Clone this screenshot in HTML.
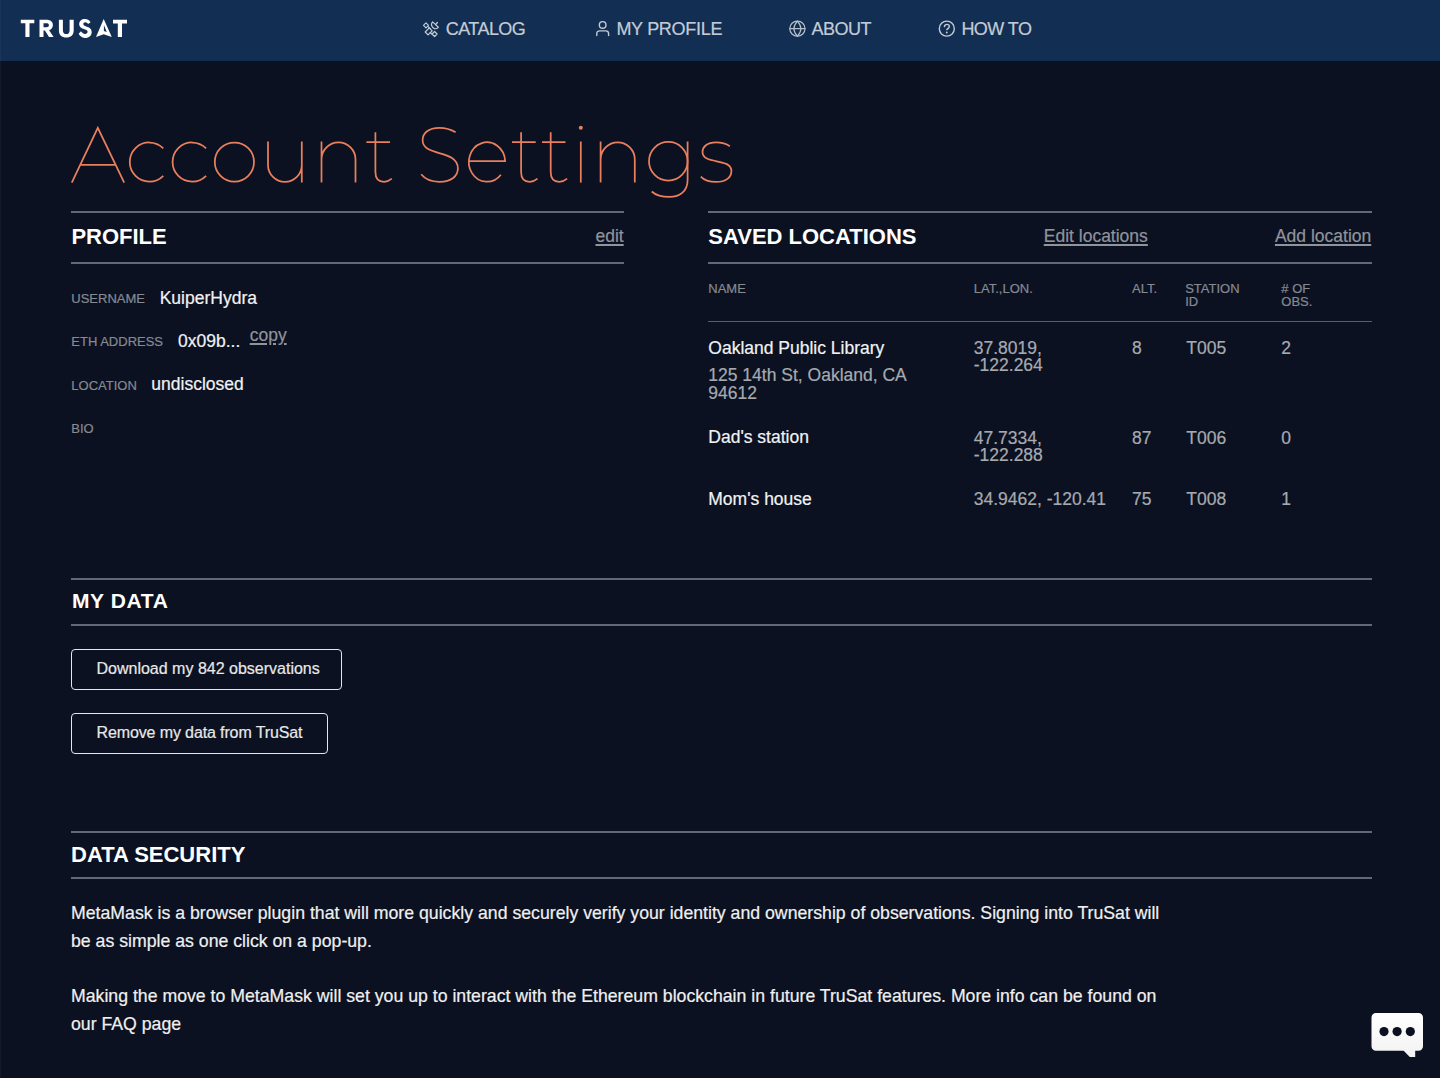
<!DOCTYPE html>
<html><head><meta charset="utf-8">
<style>
html,body{margin:0;padding:0;}
body{width:1440px;height:1078px;overflow:hidden;background:#0b1121;position:relative;font-family:"Liberation Sans",sans-serif;color:#f0f0f0;}
.t{position:absolute;white-space:nowrap;-webkit-text-stroke:0.2px currentColor;}
.hdr{position:absolute;left:0;top:0;width:1440px;height:61px;background:#122e52;box-shadow:0 1px 0 #0a101d;}
.edge{position:absolute;left:0;top:0;width:1px;height:1078px;background:rgba(255,255,255,0.035);}
.nav{font-size:18px;line-height:18px;color:#c3ccd6;letter-spacing:-0.55px;top:20.3px;}
.h2{font-size:22px;line-height:22px;font-weight:bold;color:#fff;-webkit-text-stroke:0;}
.lnk{font-size:17.5px;line-height:17.5px;color:#90949b;text-decoration:underline;text-underline-offset:1.5px;text-decoration-thickness:1.5px;}
.lbl{font-size:13px;line-height:13px;color:#868a91;}
.val{font-size:17.5px;line-height:17.5px;color:#f2f2f2;}
.gry{font-size:17.5px;line-height:17.5px;color:#a7aaaf;}
.line2{position:absolute;height:2px;background:#646876;}
.line1{position:absolute;height:1px;background:#5a5e66;}
.btn{position:absolute;box-sizing:border-box;border:1.5px solid #e6e6e6;border-radius:4px;}
.btxt{font-size:16px;line-height:16px;color:#e8e8e8;}
.para{font-size:17.7px;line-height:17.7px;color:#f0f0f0;}
</style></head><body>
<div class="hdr"></div>

<svg style="position:absolute;left:0;top:0" width="1440" height="1078" viewBox="0 0 1440 1078">
<!-- logo -->
<g fill="#ffffff">
<path d="M20.8,19.8H34.3V23.3H29.5V37.1H25.4V23.3H20.8Z"/>
<path fill-rule="evenodd" d="M39.5,19.8H46.5C50.6,19.8 52.9,21.9 52.9,25.1C52.9,27.7 51.5,29.5 49.1,30.2L53.6,37.1H49L44.9,30.6H43.5V37.1H39.5ZM43.5,23.3V27.2H46.3C48,27.2 48.9,26.5 48.9,25.2C48.9,23.9 48,23.3 46.3,23.3Z"/>
<path d="M58.9,19.8H62.9V30.2C62.9,32.8 64.2,34.1 66.3,34.1C68.4,34.1 69.6,32.8 69.6,30.2V19.8H73.7V30.2C73.7,35 70.8,37.5 66.3,37.5C61.8,37.5 58.9,35 58.9,30.2Z"/>
<path d="M90.6,22.2C89.2,20.2 87.3,19 85,19C81.5,19 79.2,21.1 79.2,24C79.2,27.2 81.6,28.3 84.3,29.2C86.5,29.9 87.6,30.4 87.6,31.8C87.6,33 86.6,33.9 85.1,33.9C83.3,33.9 81.9,32.8 81,31.3L78.6,33.8C80,36.4 82.5,38 85.2,38C89.1,38 91.7,35.6 91.7,32C91.7,28.6 89.4,27.4 86.4,26.4C84.4,25.7 83.3,25.3 83.3,24C83.3,23 84.1,22.3 85.2,22.3C86.4,22.3 87.4,23 88.1,24.1Z"/>
<path fill-rule="evenodd" d="M103.7,19L111.8,37L103.7,34.2L96,36.9ZM103.9,25V31L106.8,31.9Z"/>
<path d="M113,19.8H127V23.4H122V37.1H117.8V23.4H113Z"/>
</g>
<!-- nav icons -->
<g fill="none" stroke="#c3ccd6" stroke-width="1.4" stroke-linecap="round" stroke-linejoin="round">
  <!-- person -->
  <circle cx="602.66" cy="24.9" r="3.3"/>
  <path d="M596.8,35.6V33.6C596.8,31.8 598,30.9 599.8,30.9H605.6C607.4,30.9 608.6,31.8 608.6,33.6V35.6"/>
  <!-- globe -->
  <g stroke-width="1.2" stroke="#b4bfcc">
  <circle cx="797.4" cy="28.66" r="7.6"/>
  <path d="M789.8,28.66H805"/>
  <path d="M797.4,21.06C794.9,24 793.9,26.5 793.9,28.66C793.9,30.8 794.9,33.3 797.4,36.26C799.9,33.3 800.9,30.8 800.9,28.66C800.9,26.5 799.9,24 797.4,21.06Z"/>
  </g>
  <!-- question -->
  <circle cx="946.8" cy="28.66" r="7.5"/>
  <path d="M944.4,26.6C944.6,25.2 945.6,24.4 946.9,24.4C948.3,24.4 949.3,25.3 949.3,26.5C949.3,27.9 948,28.5 946.8,29.6"/>
  <!-- catalog satellite -->
</g>
<g fill="none" stroke="#c3ccd6" stroke-width="1.2" stroke-linecap="round" stroke-linejoin="round">
  <path d="M425.96,22.9L428.46,25.4L425.96,27.9L423.46,25.4Z"/>
  <path d="M434.6,31.5L437.1,34L434.6,36.5L432.1,34Z"/>
  <path d="M429.3,27.9L432.2,30.8L428.1,34.9L425.2,32Z"/>
  <path d="M432.6,21.9C431.2,23.6 431.3,26.1 433.1,27.7C434.8,29.2 437,29.2 438.4,27.2Z"/>
  <path d="M435.6,24.5L437.4,22.5"/>
  <path d="M428.4,27L430.6,29.2M430.2,32.5L432.4,34.7"/>
</g>
<circle cx="946.8" cy="32.5" r="0.95" fill="#c3ccd6"/>
<!-- title -->
<g fill="none" stroke="#ea7f5d" stroke-width="1.75">
<path d="M71.8,182.6L97.8,127.8L124.2,182.6M80,164.9H115.7"/>
<path d="M163.3,148.3A19.6,19.6 0 1 0 163.3,175.9"/>
<path d="M206.1,148.3A19.6,19.6 0 1 0 206.1,175.9"/>
<circle cx="234.4" cy="162.1" r="19.6"/>
<path d="M268,141.5V164.9A16.9,16.9 0 0 0 301.8,164.9M301.8,141.5V182.6"/>
<path d="M321.5,182.6V141.5M321.5,159.4A17,17 0 0 1 355.5,159.4V182.6"/>
<path d="M375.4,132.2V172C375.4,179 379,181.75 384,181.75C387,181.75 389.5,180.6 391.8,178.6M366.4,142H390"/>
<path d="M455.6,132.3C450.5,129.2 445,127.85 439.5,127.85C428,127.85 422.6,133.5 422.6,140.3C422.6,157 457.9,149 457.9,168.5C457.9,176 451.5,181.75 439.5,181.75C431,181.75 424.5,178.6 421.2,174.3"/>
<path d="M468.85,161.1H505.13A18.15,19.7 0 1 0 500.90,174.71"/>
<path d="M521.1,132.2V172C521.1,179 524.7,181.75 529.7,181.75C532.7,181.75 535.2,180.6 537.5,178.6M512,142H535.7"/>
<path d="M550.7,132.2V172C550.7,179 554.3,181.75 559.3,181.75C562.3,181.75 564.8,180.6 567.1,178.6M542,142H565.5"/>
<path d="M580.8,141.5V182.6"/>
<path d="M600.6,182.6V141.5M600.6,159.45A17.1,17.1 0 0 1 634.8,159.45V182.6"/>
<circle cx="668.3" cy="161.2" r="19.3"/>
<path d="M687.6,141.5V180C687.6,191 680,196.95 669.5,196.95C661,196.95 655,194.5 651.7,191.5"/>
<path d="M729.8,146.3C725.8,143.3 720.5,142.35 716,142.35C707,142.35 702.5,146.8 702.5,152C702.5,165 731.4,157.5 731.4,171C731.4,177.5 726,181.95 716,181.95C709,181.95 703.5,179.5 700.8,176.6"/>
</g>
<circle cx="580.8" cy="127.8" r="2" fill="#ea7f5d"/>
<!-- chat bubble -->
<defs><linearGradient id="bg1" x1="0" y1="0" x2="0" y2="1"><stop offset="0" stop-color="#ffffff"/><stop offset="1" stop-color="#f2f2f2"/></linearGradient></defs><path fill="url(#bg1)" d="M1376,1013H1418.5A4.5,4.5 0 0 1 1423,1017.5V1046.3A4.5,4.5 0 0 1 1418.5,1050.8H1415.2V1057H1409.8L1403.7,1050.8H1376A4.5,4.5 0 0 1 1371.5,1046.3V1017.5A4.5,4.5 0 0 1 1376,1013Z"/>
<g fill="#0b1121"><circle cx="1384" cy="1031.6" r="4.6"/><circle cx="1397.1" cy="1031.6" r="4.6"/><circle cx="1410.3" cy="1031.6" r="4.6"/></g>
</svg>


<div class="t nav" style="left:445.75px">CATALOG</div>
<div class="t nav" style="left:616.4px;letter-spacing:-0.3px">MY PROFILE</div>
<div class="t nav" style="left:811.6px">ABOUT</div>
<div class="t nav" style="left:961.4px">HOW TO</div>

<!-- PROFILE -->
<div class="line2" style="left:71px;top:211px;width:553px"></div>
<div class="t h2" style="left:71.4px;top:226.1px">PROFILE</div>
<div class="t lnk" style="right:816.3px;top:227.9px">edit</div>
<div class="line2" style="left:71px;top:262px;width:553px"></div>

<div class="t lbl" style="left:71.3px;top:292px">USERNAME</div>
<div class="t val" style="left:159.7px;top:289.7px">KuiperHydra</div>
<div class="t lbl" style="left:71.3px;top:335.3px">ETH ADDRESS</div>
<div class="t val" style="left:178px;top:332.7px">0x09b...</div>
<div class="t lnk" style="left:249.7px;top:327px">copy</div>
<div class="t lbl" style="left:71.3px;top:379px">LOCATION</div>
<div class="t val" style="left:151.3px;top:376px">undisclosed</div>
<div class="t lbl" style="left:71.3px;top:421.8px">BIO</div>

<!-- SAVED LOCATIONS -->
<div class="line2" style="left:708px;top:211px;width:664px"></div>
<div class="t h2" style="left:708.3px;top:226.1px">SAVED LOCATIONS</div>
<div class="t lnk" style="left:1043.75px;top:227.7px">Edit locations</div>
<div class="t lnk" style="right:68.75px;top:227.7px">Add location</div>
<div class="line2" style="left:708px;top:262px;width:664px"></div>

<div class="t lbl" style="left:708.25px;top:281.5px">NAME</div>
<div class="t lbl" style="left:973.75px;top:281.5px">LAT.,LON.</div>
<div class="t lbl" style="left:1132px;top:281.5px">ALT.</div>
<div class="t lbl" style="left:1185.2px;top:281.5px">STATION<br>ID</div>
<div class="t lbl" style="left:1281.3px;top:281.5px"># OF<br>OBS.</div>
<div class="line1" style="left:708px;top:321px;width:664px"></div>

<div class="t val" style="left:708.3px;top:339.9px">Oakland Public Library</div>
<div class="t gry" style="left:708.3px;top:366px;line-height:18px">125 14th St, Oakland, CA<br>94612</div>
<div class="t gry" style="left:973.75px;top:340.4px;line-height:17px">37.8019,<br>-122.264</div>
<div class="t gry" style="left:1132px;top:340.4px">8</div>
<div class="t gry" style="left:1186.25px;top:340.4px">T005</div>
<div class="t gry" style="left:1281.25px;top:340.4px">2</div>

<div class="t val" style="left:708.3px;top:429.2px">Dad's station</div>
<div class="t gry" style="left:973.75px;top:429.7px;line-height:17px">47.7334,<br>-122.288</div>
<div class="t gry" style="left:1132px;top:429.7px">87</div>
<div class="t gry" style="left:1186.25px;top:429.7px">T006</div>
<div class="t gry" style="left:1281.25px;top:429.7px">0</div>

<div class="t val" style="left:708.3px;top:491.2px">Mom's house</div>
<div class="t gry" style="left:973.75px;top:491.2px">34.9462, -120.41</div>
<div class="t gry" style="left:1132px;top:491.2px">75</div>
<div class="t gry" style="left:1186.25px;top:491.2px">T008</div>
<div class="t gry" style="left:1281.25px;top:491.2px">1</div>

<!-- MY DATA -->
<div class="line2" style="left:71px;top:578px;width:1301px"></div>
<div class="t h2" style="left:71.9px;top:590px;font-size:21px;line-height:21px;letter-spacing:0.65px">MY DATA</div>
<div class="line2" style="left:71px;top:624px;width:1301px"></div>

<div class="btn" style="left:71px;top:649px;width:271px;height:41px"></div>
<div class="t btxt" style="left:96.5px;top:660.5px">Download my 842 observations</div>
<div class="btn" style="left:71px;top:713px;width:257px;height:41px"></div>
<div class="t btxt" style="left:96.5px;top:724.5px;letter-spacing:-0.12px">Remove my data from TruSat</div>

<!-- DATA SECURITY -->
<div class="line2" style="left:71px;top:831px;width:1301px"></div>
<div class="t h2" style="left:71px;top:843.6px">DATA SECURITY</div>
<div class="line2" style="left:71px;top:877px;width:1301px"></div>

<div class="t para" style="left:71px;top:904.7px">MetaMask is a browser plugin that will more quickly and securely verify your identity and ownership of observations. Signing into TruSat will</div>
<div class="t para" style="left:71px;top:932.5px">be as simple as one click on a pop-up.</div>
<div class="t para" style="left:71px;top:988.2px">Making the move to MetaMask will set you up to interact with the Ethereum blockchain in future TruSat features. More info can be found on</div>
<div class="t para" style="left:71px;top:1015.7px">our FAQ page</div>

<div class="edge"></div>
</body></html>
